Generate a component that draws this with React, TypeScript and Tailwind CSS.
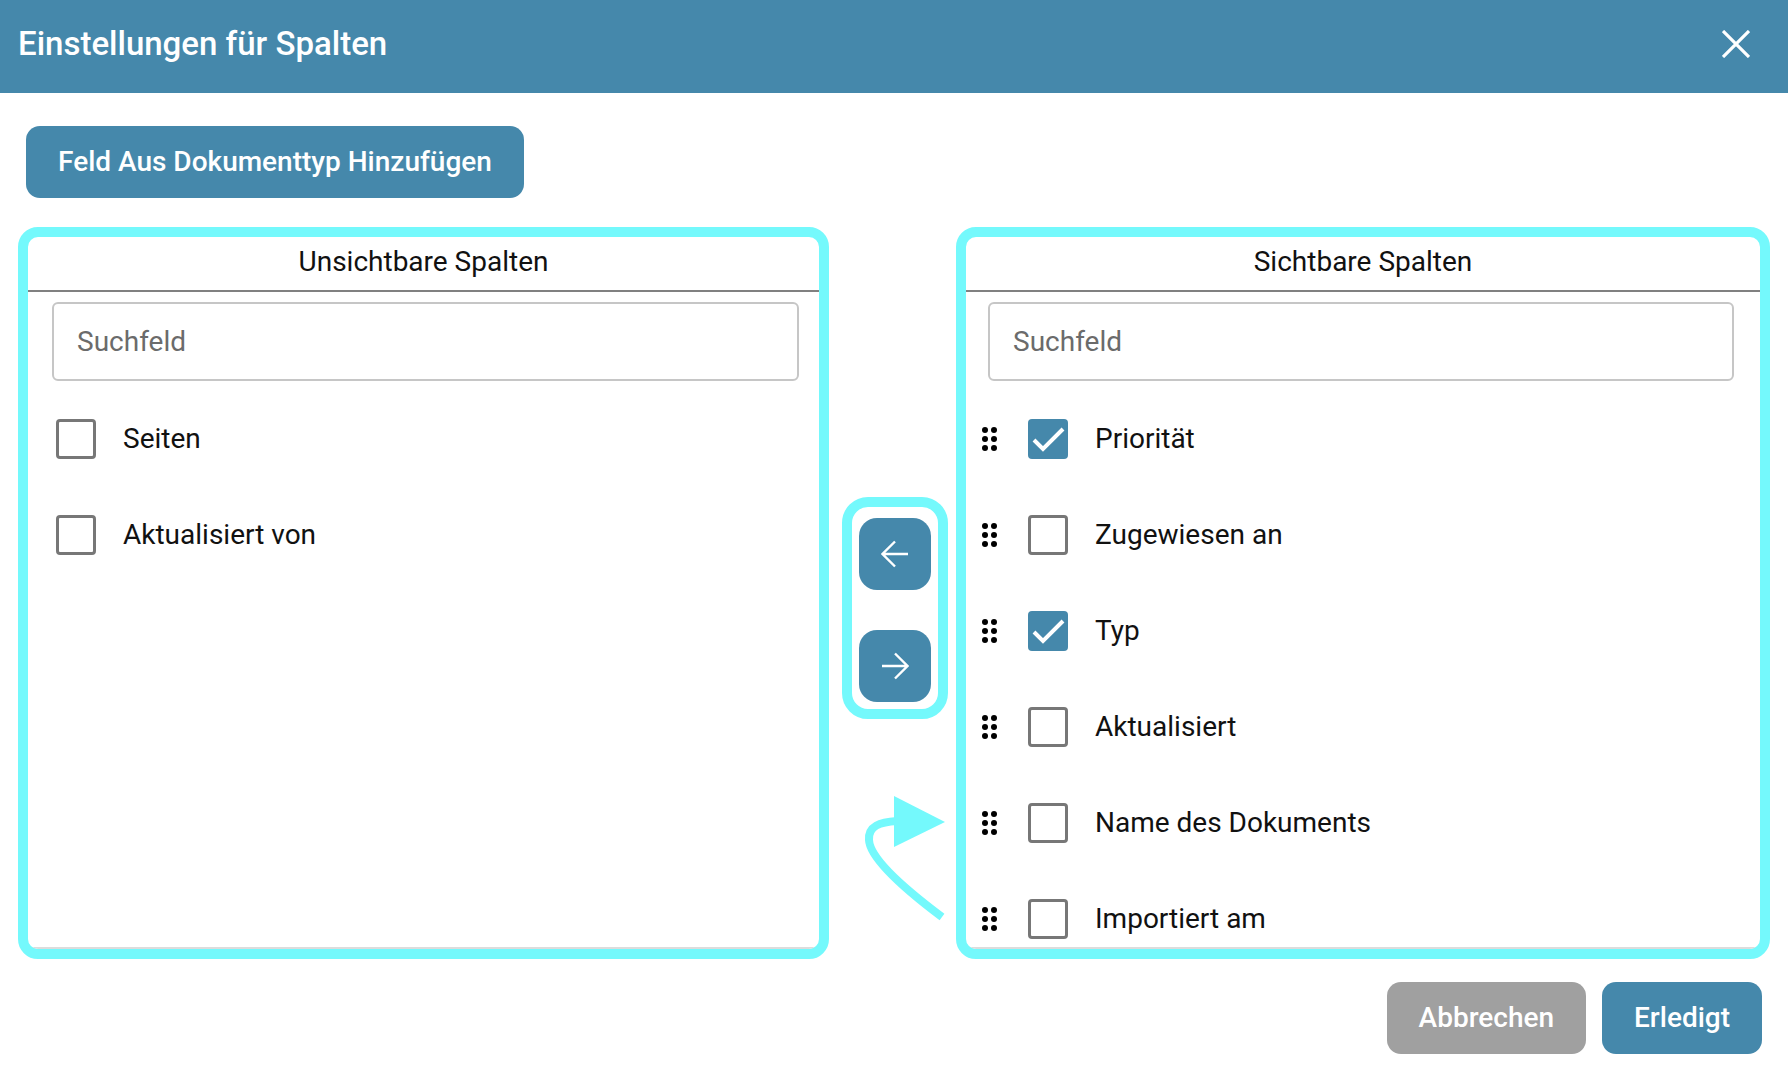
import React from 'react';

const CYAN = 'border-[#74f9fc]';

const hidden = ['Seiten', 'Aktualisiert von'];
const visible = [
  { label: 'Priorität', checked: true },
  { label: 'Zugewiesen an', checked: false },
  { label: 'Typ', checked: true },
  { label: 'Aktualisiert', checked: false },
  { label: 'Name des Dokuments', checked: false },
  { label: 'Importiert am', checked: false },
];

const Checkbox = ({ checked }: { checked: boolean }) =>
  checked ? (
    <div className="w-10 h-10 shrink-0 rounded-[4px] bg-[#4588ab] flex items-center justify-center">
      <svg width="40" height="40" viewBox="0 0 40 40">
        <polyline points="6,21 15,30 35,10" fill="none" stroke="#fff" strokeWidth="4" />
      </svg>
    </div>
  ) : (
    <div className="w-10 h-10 shrink-0 rounded-[4px] border-[3px] border-[#777777] bg-white" />
  );

const DragHandle = () => (
  <svg width="15" height="24" viewBox="0 0 15 24" className="shrink-0">
    {[3, 12, 21].map((y) => (
      <g key={y}>
        <circle cx="3" cy={y} r="3" fill="#000" />
        <circle cx="12" cy={y} r="3" fill="#000" />
      </g>
    ))}
  </svg>
);

const Panel = ({
  title,
  className,
  searchPad,
  children,
}: {
  title: string;
  className: string;
  searchPad: string;
  children: React.ReactNode;
}) => (
  <div className={`${className} border-[10px] ${CYAN} rounded-[20px] bg-white flex flex-col overflow-hidden`}>
    <div className="h-[55px] shrink-0 flex items-center justify-center pb-[3px] text-[28px] text-[#111] border-b-2 border-[#808080]">
      {title}
    </div>
    <div className={`pt-[10px] shrink-0 ${searchPad}`}>
      <input
        placeholder="Suchfeld"
        className="w-full h-[79px] border-2 border-[#c6c6c6] rounded-md pl-[23px] text-[28px] text-[#111] placeholder:text-[#6b6b6b] outline-none"
      />
    </div>
    <div className="mt-[10px] flex-1 overflow-hidden border-b-2 border-[#dcdcdc]">{children}</div>
  </div>
);

const ArrowIcon = ({ dir }: { dir: 'left' | 'right' }) => (
  <svg width="28" height="28" viewBox="0 0 28 28" className={dir === 'right' ? 'rotate-180' : ''}>
    <path d="M27 14H2 M14 1.5 L1.5 14 L14 26.5" fill="none" stroke="#fff" strokeWidth="2.4" />
  </svg>
);

export default function App() {
  return (
    <div className="relative w-[1788px] h-[1080px] bg-white overflow-hidden flex flex-col font-['Roboto','Noto_Sans',sans-serif]">
      <div className="h-[93px] shrink-0 bg-[#4588ab] flex items-center justify-between pl-[18px] pr-[38px] pb-[6px]">
        <h1 className="text-white text-[33px] font-medium">Einstellungen für Spalten</h1>
        <svg width="28" height="28" viewBox="0 0 28 28">
          <path d="M1 1L27 27M27 1L1 27" stroke="#fff" strokeWidth="3.2" />
        </svg>
      </div>

      <div className="flex-1 flex flex-col px-[18px]">
        <button className="mt-[33px] ml-2 self-start h-[72px] px-8 rounded-[14px] bg-[#4588ab] text-white text-[28px] font-medium">
          Feld Aus Dokumenttyp Hinzufügen
        </button>

        <div className="mt-[29px] h-[732px] flex items-start">
          <Panel title="Unsichtbare Spalten" className="w-[811px] h-full shrink-0" searchPad="pl-6 pr-5">
            {hidden.map((label) => (
              <div key={label} className="h-[96px] flex items-center pl-7 gap-[27px]">
                <Checkbox checked={false} />
                <span className="text-[28px] text-[#111]">{label}</span>
              </div>
            ))}
          </Panel>

          <div className={`ml-[13px] mt-[270px] w-[106px] h-[222px] shrink-0 border-[10px] ${CYAN} rounded-[26px] flex flex-col items-center pt-[11px] gap-10`}>
            <button className="w-[72px] h-[72px] rounded-[18px] bg-[#4588ab] flex items-center justify-center">
              <ArrowIcon dir="left" />
            </button>
            <button className="w-[72px] h-[72px] rounded-[18px] bg-[#4588ab] flex items-center justify-center">
              <ArrowIcon dir="right" />
            </button>
          </div>

          <Panel title="Sichtbare Spalten" className="ml-2 flex-1 h-full" searchPad="pl-[22px] pr-[26px]">
            {visible.map((item) => (
              <div key={item.label} className="h-[96px] flex items-center pl-4">
                <DragHandle />
                <div className="ml-[31px]">
                  <Checkbox checked={item.checked} />
                </div>
                <span className="ml-[27px] text-[28px] text-[#111]">{item.label}</span>
              </div>
            ))}
          </Panel>
        </div>

        <div className="mt-[23px] flex justify-end gap-4 pr-2">
          <button className="h-[72px] px-8 rounded-[14px] bg-[#a0a0a0] text-white text-[28px] font-medium">Abbrechen</button>
          <button className="h-[72px] px-8 rounded-[14px] bg-[#4588ab] text-white text-[28px] font-medium">Erledigt</button>
        </div>
      </div>

      {/* annotation arrow pointing at the visible list */}
      <svg className="absolute inset-0 pointer-events-none" width="1788" height="1080" viewBox="0 0 1788 1080">
        <path d="M942 917 C910 893 870 860 869 840 C868 826 880 822 897 821" fill="none" stroke="#74f9fc" strokeWidth="8" />
        <polygon points="894,796 945,822 894,847" fill="#74f9fc" />
      </svg>
    </div>
  );
}
